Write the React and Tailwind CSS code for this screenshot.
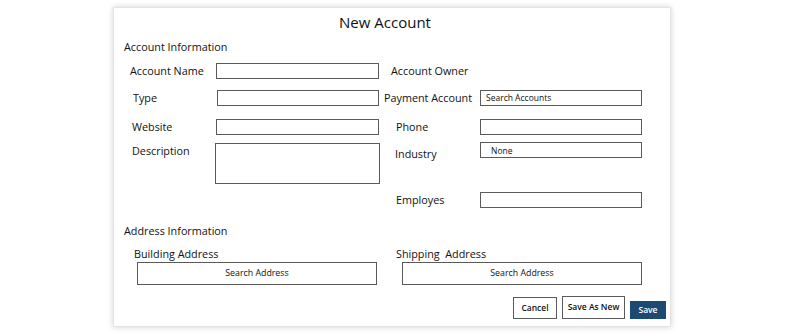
export default function App() {
  const font = { fontFamily: '"Open Sans", "Noto Sans", sans-serif' }

  return (
    <div className="w-[800px] h-[336px] bg-white pt-[7px]" style={font}>
      <div className="ml-[113px] w-[558px] h-[320px] bg-white border border-[#e4e4e4] shadow-[0_0_6px_rgba(0,0,0,0.18)] text-[#111] flex flex-col">
        {/* 제목 */}
        <div className="mt-[4px] h-[20px] leading-[20px] text-center pr-[14px] text-[15px] font-medium">New Account</div>

        <div className="mt-[8px] ml-[10px] h-[14px] leading-[14px] text-[10.8px] font-medium">Account Information</div>

        {/* row 1 */}
        <div className="mt-[9px] flex items-center h-[16px]">
          <div className="w-[102px] pl-[16px] text-[10.8px] font-medium">Account Name</div>
          <div className="w-[163px] h-[16px] border border-[#5a5a5a]"></div>
          <div className="w-[101px] pl-[12px] text-[10.8px] font-medium">Account Owner</div>
        </div>

        {/* row 2 */}
        <div className="mt-[11px] flex items-center h-[16px]">
          <div className="w-[103px] pl-[19px] text-[10.8px] font-medium">Type</div>
          <div className="w-[162px] h-[16px] border border-[#5a5a5a]"></div>
          <div className="w-[101px] pl-[5px] text-[10.8px] font-medium whitespace-nowrap">Payment Account</div>
          <div className="w-[162px] h-[16px] border border-[#5a5a5a] pl-[5px] text-[8.5px] leading-[14px] font-medium">Search Accounts</div>
        </div>

        {/* row 3 */}
        <div className="mt-[13px] flex items-center h-[16px]">
          <div className="w-[102px] pl-[18px] text-[10.8px] font-medium">Website</div>
          <div className="w-[163px] h-[16px] border border-[#5a5a5a]"></div>
          <div className="w-[101px] pl-[17px] text-[10.8px] font-medium">Phone</div>
          <div className="w-[162px] h-[16px] border border-[#5a5a5a]"></div>
        </div>

        {/* row 4 */}
        <div className="mt-[7px] flex items-start">
          <div className="w-[101px] pl-[18px] pt-[1px] text-[10.8px] font-medium">Description</div>
          <div className="w-[165px] h-[41px] mt-[1px] border border-[#5a5a5a]"></div>
          <div className="w-[100px] pl-[15px] pt-[4px] text-[10.8px] font-medium">Industry</div>
          <div className="w-[162px] h-[16px] border border-[#5a5a5a] pl-[10px] text-[8.5px] leading-[16px] font-medium">None</div>
        </div>

        {/* row 5 */}
        <div className="mt-[8px] flex items-center h-[16px]">
          <div className="w-[266px]"></div>
          <div className="w-[100px] pl-[16px] text-[10.8px] font-medium">Employes</div>
          <div className="w-[162px] h-[16px] border border-[#5a5a5a]"></div>
        </div>

        <div className="mt-[16px] ml-[10px] h-[14px] leading-[14px] text-[10.8px] font-medium">Address Information</div>

        {/* 주소 */}
        <div className="mt-[9px] flex">
          <div className="ml-[20px] w-[262px] flex flex-col">
            <div className="h-[14px] leading-[14px] text-[10.8px] font-medium">Building Address</div>
            <div className="ml-[3px] w-[240px] h-[23px] mt-[1px] border border-[#5a5a5a] flex items-center justify-center text-[8.8px] font-medium">Search Address</div>
          </div>
          <div className="w-[250px] flex flex-col">
            <div className="h-[14px] leading-[14px] text-[10.8px] font-medium whitespace-pre">Shipping  Address</div>
            <div className="ml-[6px] w-[240px] h-[23px] mt-[1px] border border-[#5a5a5a] flex items-center justify-center text-[8.8px] font-medium">Search Address</div>
          </div>
        </div>

        {/* 버튼 */}
        <div className="mt-[11px] flex items-end justify-end pr-[4px] gap-[5px]">
          <button className="w-[44px] h-[22px] border border-[#5a5a5a] bg-white text-[8.5px] font-semibold">Cancel</button>
          <button className="w-[63px] h-[23px] border border-[#5a5a5a] bg-white text-[8.5px] font-semibold">Save As New</button>
          <button className="w-[36px] h-[18px] bg-[#1d4a73] text-white text-[8.5px] font-semibold">Save</button>
        </div>
      </div>
    </div>
  )
}
